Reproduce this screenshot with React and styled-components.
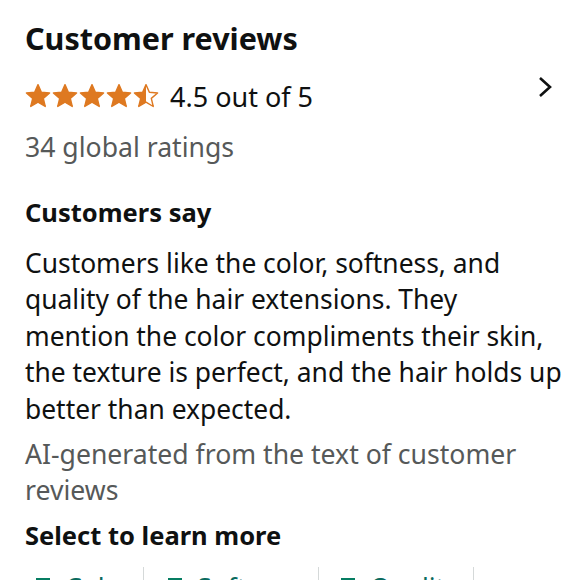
import styled, { createGlobalStyle } from 'styled-components';

const GlobalStyle = createGlobalStyle`
  body {
    margin: 0;
    background: #fff;
    font-family: 'Noto Sans', 'Liberation Sans', sans-serif;
    color: #0f1111;
  }
`;

const Page = styled.div`
  padding: 18px 14px 0 25px;
  height: 580px;
  overflow: hidden;
  box-sizing: border-box;
`;

const Title = styled.h2`
  margin: 0;
  font-size: 30.5px;
  line-height: 40px;
  font-weight: 700;
`;

const RatingRow = styled.div`
  display: flex;
  align-items: center;
  margin-top: 18px;
  height: 40px;
  padding-right: 12px;
`;

const Stars = styled.div`
  display: flex;
  gap: 1px;
  margin-right: 11px;
`;

const RatingText = styled.span`
  font-size: 27px;
  flex: 1;
`;

const Chevron = styled.svg`
  width: 16px;
  height: 22px;
  margin-bottom: 18px;
`;

const Muted = styled.p`
  margin: ${(p) => p.$top || 0}px 0 0;
  font-size: 26.6px;
  line-height: 36.6px;
  color: #565959;
`;

const SubTitle = styled.h3`
  margin: ${(p) => p.$top}px 0 0;
  font-size: 25.5px;
  line-height: 34px;
  font-weight: 700;
`;

const Summary = styled.p`
  margin: 16px 0 0;
  font-size: 26.4px;
  line-height: 36.6px;
`;

const Aspects = styled.div`
  display: flex;
  margin-top: 15px;
  margin-left: -25px;
`;

const Aspect = styled.div`
  display: flex;
  align-items: flex-start;
  gap: 14px;
  padding-top: 8px;
  width: ${(p) => p.$w}px;
  padding-left: ${(p) => p.$pl}px;
  border-right: 1px solid #d5d9d9;
  box-sizing: border-box;
  height: 40px;
  color: #0b6b5e;
  font-size: 26.5px;
  line-height: 1;
`;

const Star = ({ fill }) => (
  <svg width="26" height="26" viewBox="0 0 24 24">
    <defs>
      <clipPath id="half">
        <rect x="0" y="0" width="12" height="24" />
      </clipPath>
    </defs>
    <path
      d="M12 1.5l3.1 7 7.6.7-5.8 5 1.8 7.5L12 17.7l-6.7 4 1.8-7.5-5.8-5 7.6-.7z"
      fill={fill === 'full' ? '#de7921' : '#fff'}
      stroke="#de7921"
      strokeWidth="1.3"
      strokeLinejoin="round"
    />
    {fill === 'half' && (
      <path
        d="M12 1.5l3.1 7 7.6.7-5.8 5 1.8 7.5L12 17.7l-6.7 4 1.8-7.5-5.8-5 7.6-.7z"
        fill="#de7921"
        clipPath="url(#half)"
      />
    )}
  </svg>
);

const Check = () => (
  <svg width="16" height="16" viewBox="0 0 16 16" style={{ marginTop: 3 }}>
    <path d="M1 1.5h14M9 1.5v12" fill="none" stroke="#067d62" strokeWidth="3" />
  </svg>
);

const aspects = [
  { label: 'Color', w: 144, pl: 35 },
  { label: 'Softness', w: 175, pl: 23 },
  { label: 'Quality', w: 155, pl: 21 },
];

export default function App() {
  return (
    <Page>
      <GlobalStyle />
      <Title>Customer reviews</Title>
      <RatingRow>
        <Stars>
          {['full', 'full', 'full', 'full', 'half'].map((f, i) => (
            <Star key={i} fill={f} />
          ))}
        </Stars>
        <RatingText>4.5 out of 5</RatingText>
        <Chevron viewBox="0 0 16 22">
          <path d="M3 2l10 9-10 9" fill="none" stroke="#0f1111" strokeWidth="2.6" />
        </Chevron>
      </RatingRow>
      <Muted $top={13}>34 global ratings</Muted>
      <SubTitle $top={29}>Customers say</SubTitle>
      <Summary>
        Customers like the color, softness, and quality of the hair extensions. They
        mention the color compliments their skin, the texture is perfect, and the hair
        holds up better than expected.
      </Summary>
      <Muted $top={8}>AI-generated from the text of customer reviews</Muted>
      <SubTitle $top={9}>Select to learn more</SubTitle>
      <Aspects>
        {aspects.map((a) => (
          <Aspect key={a.label} $w={a.w} $pl={a.pl}>
            <Check />
            {a.label}
          </Aspect>
        ))}
      </Aspects>
    </Page>
  );
}
